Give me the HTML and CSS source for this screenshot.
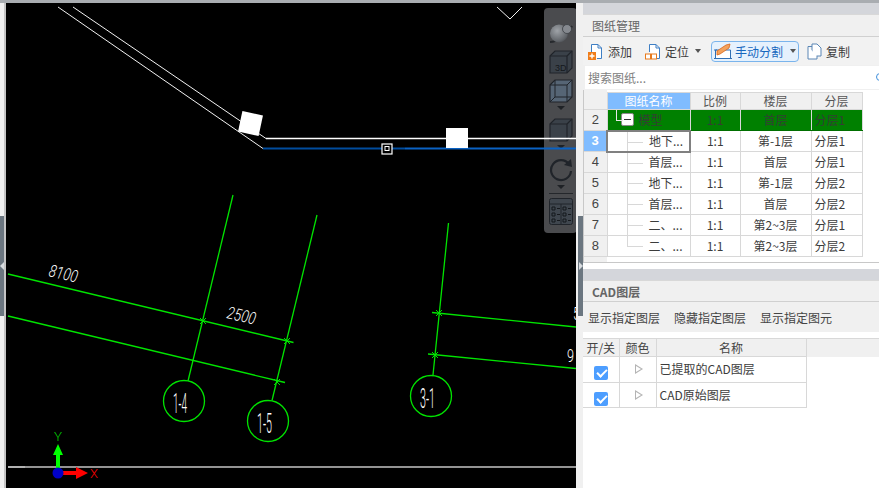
FILE: index.html
```html
<!DOCTYPE html>
<html lang="en">
<head>
  <meta charset="UTF-8">
  <meta name="viewport" content="width=device-width, initial-scale=1.0">
  <title>图纸管理</title>
  <link rel="stylesheet" href="styles.css">
</head>
<body>
  <div class="app">
    <div class="split split-left"><span class="grip"><i class="grip-arrow arrow-left"></i></span></div>

    <!-- drawing canvas -->
    <div class="canvas">
      <div class="view-tools">
        <svg class="vt-icon vt-sphere" width="24" height="22" viewBox="0 0 24 22">
          <defs>
            <radialGradient id="ball" cx="0.4" cy="0.35" r="0.8">
              <stop offset="0" stop-color="#9fa3a8"/>
              <stop offset="0.7" stop-color="#63676c"/>
              <stop offset="1" stop-color="#3a3d42"/>
            </radialGradient>
          </defs>
          <path d="M1 20 C8 20 19 13 23 4" fill="none" stroke="#26292d" stroke-width="2"/>
          <circle cx="10" cy="11.5" r="9" fill="url(#ball)"/>
          <circle cx="18" cy="7" r="4.5" fill="#85898f" stroke="#3a3d42" stroke-width="0.8"/>
        </svg>
        <svg class="vt-icon vt-box3d" width="24" height="24" viewBox="0 0 24 24">
          <path d="M1 6 L6 1 H23 V18 L18 23 H1 Z" fill="#3a4149" stroke="#20242a" stroke-width="1.2"/>
          <path d="M1 6 H18 V23 M18 6 L23 1" fill="none" stroke="#20242a" stroke-width="1.2"/>
          <text x="6" y="20.5" class="vt-3d">3D</text>
        </svg>
        <svg class="vt-icon vt-boxwire" width="24" height="24" viewBox="0 0 24 24">
          <path d="M1 6 L6 1 H23 V18 L18 23 H1 Z" fill="#566575" stroke="#20242a" stroke-width="1.2"/>
          <path d="M1 6 H18 V23 M18 6 L23 1 M6 1 V18 H23 M6 18 L1 23" fill="none" stroke="#20242a" stroke-width="1"/>
        </svg>
        <i class="vt-caret"></i>
        <svg class="vt-icon vt-near" width="24" height="24" viewBox="0 0 24 24">
          <path d="M1 6 L6 1 H23 V18 L18 23 H1 Z" fill="#3a4149" stroke="#20242a" stroke-width="1.2"/>
          <path d="M1 6 H18 V23 M18 6 L23 1" fill="none" stroke="#20242a" stroke-width="1.2"/>
        </svg>
        <i class="vt-caret"></i>
        <svg class="vt-icon vt-rotate" width="24" height="24" viewBox="0 0 24 24">
          <path d="M20 6 A10 10 0 1 0 22 13" fill="none" stroke="#20242a" stroke-width="2.2"/>
          <path d="M15 7 L23 9 L22 1 Z" fill="#20242a"/>
        </svg>
        <i class="vt-caret"></i>
        <span class="vt-sep"></span>
        <svg class="vt-icon" width="24" height="27" viewBox="0 0 24 27">
          <rect x="0.5" y="0.5" width="23" height="26" rx="2" fill="#3f464e" stroke="#20242a"/>
          <path d="M0.5 6 H23.5 M12 6 V26" stroke="#20242a" fill="none"/>
          <path d="M3 9 H6 V12 H3 Z M3 15 H6 V18 H3 Z M3 21 H6 V24 H3 Z M14 9 H17 V12 H14 Z M14 15 H17 V18 H14 Z M14 21 H17 V24 H14 Z M8 10.5 H11 M8 16.5 H11 M8 22.5 H11 M19 10.5 H22 M19 16.5 H22 M19 22.5 H22" stroke="#15181c" fill="none"/>
        </svg>
      </div>

      <svg class="drawing" width="570" height="485" viewBox="6 3 570 485">
        <g fill="none" stroke="#f2f2f2" stroke-width="1">
          <path d="M73 7 L266 138.5"/>
          <path d="M58 7 L263 148.5"/>
          <path d="M497 7 L510 19 L522 7"/>
          <path d="M266 138.5 H576" stroke="#fff" stroke-width="1.3"/>
        </g>
        <path d="M263 148.5 H405" stroke="#004c9e" stroke-width="2"/>
        <path d="M405 148.5 H576" stroke="#0a62c4" stroke-width="2"/>
        <rect x="240" y="113" width="21" height="21" fill="#fff" transform="rotate(12 250.5 123.5)"/>
        <rect x="446" y="128" width="22" height="20" fill="#fff"/>
        <rect x="382" y="144" width="10" height="10" fill="#000" stroke="#fff" stroke-width="1.2"/>
        <rect x="385" y="146.5" width="4" height="4" fill="#000" stroke="#fff"/>

        <g fill="none" stroke="#00e400" stroke-width="1.3">
          <path d="M8 274 L293.5 342.5"/>
          <path d="M8 316 L285 382.5"/>
          <path d="M233 195 L188 381"/>
          <path d="M317 215 L272 400.5"/>
          <path d="M448.5 223 L433 375"/>
          <path d="M432 312.5 L576 327"/>
          <path d="M428 354 L576 368.5"/>
          <circle cx="184" cy="401" r="20.5"/>
          <circle cx="268" cy="421" r="20.5"/>
          <circle cx="431" cy="396" r="20.5"/>
        </g>
        <g fill="none" stroke="#00e400" stroke-width="1">
          <path d="M200 318 L206 324 M206 318 L200 324"/>
          <path d="M284 338 L290 344 M290 338 L284 344"/>
          <path d="M274 379 L280 385 M280 379 L274 385"/>
          <path d="M436 310 L442 316 M442 310 L436 316"/>
          <path d="M432 352 L438 358 M438 352 L432 358"/>
        </g>

        <g class="cad-text">
          <text x="48" y="276" font-size="17" font-style="italic" textLength="29" lengthAdjust="spacingAndGlyphs" transform="rotate(13 48 276)">8100</text>
          <text x="226" y="318" font-size="17" font-style="italic" textLength="29" lengthAdjust="spacingAndGlyphs" transform="rotate(13 226 318)">2500</text>
          <text x="173" y="413" font-size="27" textLength="14" lengthAdjust="spacingAndGlyphs">1-4</text>
          <text x="257" y="433" font-size="27" textLength="15" lengthAdjust="spacingAndGlyphs">1-5</text>
          <text x="420" y="408" font-size="27" textLength="15" lengthAdjust="spacingAndGlyphs">3-1</text>
          <text x="573" y="320" font-size="18" textLength="7" lengthAdjust="spacingAndGlyphs">5</text>
          <text x="567" y="362" font-size="19" textLength="7" lengthAdjust="spacingAndGlyphs">9</text>
        </g>

        <path d="M8 467 H25" stroke="#fff" stroke-width="1.4"/>
        <path d="M25 467 H576" stroke="#c4c4c4" stroke-width="1.4"/>

        <path d="M56 473 V455 H53 L58 444 L63 455 H60 V473 Z" fill="#0f0"/>
        <path d="M58 471 H76 V467 L88 473 L76 479 V475 H58 Z" fill="#f00"/>
        <circle cx="58" cy="473" r="5.5" fill="#0000c8"/>
        <text x="54" y="441" class="axis-y" textLength="8" lengthAdjust="spacingAndGlyphs">Y</text>
        <text x="90" y="478" class="axis-x" textLength="8" lengthAdjust="spacingAndGlyphs">X</text>
      </svg>
    </div>

    <div class="split split-right"><span class="grip"><i class="grip-arrow arrow-right"></i></span></div>

    <!-- side panel -->
    <div class="side">
      <div class="band band-top"></div>
      <div class="pane-title">图纸管理</div>
      <div class="sheet-tools">
        <button class="tool tool-add">
          <svg width="15" height="17" viewBox="0 0 15 17">
            <path d="M3.5 9 V1.5 H10 L13.5 5 V15.5 H9" fill="#fff" stroke="#3f7fc4"/>
            <path d="M10 1.5 V5 H13.5" fill="none" stroke="#3f7fc4"/>
            <rect x="0" y="9" width="8" height="8" fill="#f07d1a"/>
            <path d="M4 10.5 V15.5 M1.5 13 H6.5" stroke="#fff" stroke-width="1.4"/>
          </svg>
          添加
        </button>
        <button class="tool tool-locate">
          <svg width="16" height="17" viewBox="0 0 16 17">
            <path d="M4.5 9 V1.5 H11 L14.5 5 V15.5 H12" fill="#fff" stroke="#3f7fc4"/>
            <path d="M11 1.5 V5 H14.5" fill="none" stroke="#3f7fc4"/>
            <rect x="0.5" y="11" width="5" height="5" fill="#fff" stroke="#e8791a"/>
            <rect x="6.5" y="11" width="5" height="5" fill="#fff" stroke="#e8791a"/>
          </svg>
          定位<i class="caret"></i>
        </button>
        <button class="tool tool-split">
          <svg width="18" height="17" viewBox="0 0 18 17">
            <path d="M1.5 7 H16.5 V15.5 H1.5 Z" fill="#fff" stroke="#2f6fb5"/>
            <path d="M3 8 L12 2 L16 1 L15 5 L6 11 L3 12 Z" fill="#f3a25c" stroke="#d9661a" stroke-width="0.8"/>
            <path d="M0 7 H3 M0 15.5 H3 M15 15.5 H18" stroke="#2f6fb5"/>
          </svg>
          手动分割<i class="caret"></i>
        </button>
        <button class="tool tool-copy">
          <svg width="15" height="17" viewBox="0 0 15 17">
            <path d="M5 1 H10 L14 5 V13 H5 Z" fill="#fff" stroke="#5a86b5"/>
            <path d="M1 3.5 H5 M1 3.5 V16 H10 V13" fill="#fff" stroke="#5a86b5"/>
          </svg>
          复制
        </button>
      </div>
      <div class="search">
        <input class="search-input" type="text" placeholder="搜索图纸...">
        <span class="search-dot"></span>
      </div>

      <div class="sheet-wrap">
        <table class="sheet-table">
          <colgroup>
            <col class="c-row"><col class="c-name"><col class="c-scale"><col class="c-floor"><col class="c-layer">
          </colgroup>
          <thead>
            <tr><th class="corner"></th><th class="head-on">图纸名称</th><th>比例</th><th>楼层</th><th>分层</th></tr>
          </thead>
          <tbody>
            <tr class="row-model">
              <th>2</th>
              <td class="tree tree-root"><span class="tree-box"></span>模型</td>
              <td>1:1</td><td>首层</td><td class="layer">分层1</td>
            </tr>
            <tr>
              <th class="head-on">3</th>
              <td class="tree tree-leaf current">地下...</td>
              <td>1:1</td><td>第-1层</td><td class="layer">分层1</td>
            </tr>
            <tr>
              <th>4</th>
              <td class="tree tree-leaf">首层...</td>
              <td>1:1</td><td>首层</td><td class="layer">分层1</td>
            </tr>
            <tr>
              <th>5</th>
              <td class="tree tree-leaf">地下...</td>
              <td>1:1</td><td>第-1层</td><td class="layer">分层2</td>
            </tr>
            <tr>
              <th>6</th>
              <td class="tree tree-leaf">首层...</td>
              <td>1:1</td><td>首层</td><td class="layer">分层2</td>
            </tr>
            <tr>
              <th>7</th>
              <td class="tree tree-leaf">二、...</td>
              <td>1:1</td><td>第2~3层</td><td class="layer">分层1</td>
            </tr>
            <tr>
              <th>8</th>
              <td class="tree tree-leaf tree-last">二、...</td>
              <td>1:1</td><td>第2~3层</td><td class="layer">分层2</td>
            </tr>
          </tbody>
        </table>
      </div>

      <div class="band band-mid"></div>
      <div class="pane-title pane-title-bold">CAD图层</div>
      <div class="layer-tools">
        <span>显示指定图层</span>
        <span>隐藏指定图层</span>
        <span>显示指定图元</span>
      </div>
      <table class="layer-table">
        <colgroup>
          <col class="l-on"><col class="l-color"><col class="l-name"><col>
        </colgroup>
        <thead>
          <tr><th>开/关</th><th>颜色</th><th>名称</th><th class="filler"></th></tr>
        </thead>
        <tbody>
          <tr class="layer-row-a">
            <td><span class="check"></span></td>
            <td><span class="play"></span></td>
            <td class="layer-name">已提取的CAD图层</td>
            <td class="filler"></td>
          </tr>
          <tr class="layer-row-b">
            <td><span class="check"></span></td>
            <td><span class="play"></span></td>
            <td class="layer-name">CAD原始图层</td>
            <td class="filler"></td>
          </tr>
        </tbody>
      </table>
    </div>
  </div>
</body>
</html>
```

FILE: styles.css
```css
* {
  box-sizing: border-box;
}

html, body {
  margin: 0;
  padding: 0;
  height: 100%;
  overflow: hidden;
}

body {
  font-family: "Noto Sans CJK SC", "Liberation Sans", sans-serif;
  font-size: 12px;
  color: #3c3c3c;
  background: #fff;
}

.app {
  display: flex;
  width: 879px;
  height: 488px;
  border-top: 3px solid #a9adb1;
}

/* splitters */
.split {
  position: relative;
  flex: none;
  background: #f0f0f0;
}
.split-left {
  width: 6px;
  border-right: 2px solid #c4c4c4;
}
.split-right {
  width: 7px;
}
.grip {
  position: absolute;
  top: 213px;
  width: 5px;
  height: 100px;
  background: #6b7680;
}
.split-left .grip {
  left: 0;
  width: 4px;
}
.split-right .grip {
  left: 2px;
}
.grip-arrow {
  position: absolute;
  top: 46px;
  width: 0;
  height: 0;
  border-top: 4px solid transparent;
  border-bottom: 4px solid transparent;
}
.arrow-left {
  left: 0;
  border-right: 4px solid #d8dce0;
}
.arrow-right {
  left: 1px;
  border-left: 4px solid #d8dce0;
}

/* canvas */
.canvas {
  position: relative;
  flex: none;
  width: 570px;
  height: 485px;
  background: #000;
  overflow: hidden;
}
.drawing {
  position: absolute;
  left: 0;
  top: 0;
  display: block;
}
.cad-text text {
  font-family: Roboto, "Liberation Sans", sans-serif;
  font-weight: 300;
  fill: #fff;
}
.axis-y, .axis-x {
  font-family: Roboto, "Liberation Sans", sans-serif;
  font-weight: 300;
  font-size: 12px;
}
.axis-y {
  fill: #00d000;
}
.axis-x {
  fill: #f00;
}

.view-tools {
  position: absolute;
  left: 538px;
  top: 5px;
  width: 33px;
  height: 225px;
  padding-top: 14px;
  display: flex;
  flex-direction: column;
  align-items: center;
  background: #4a4b4e;
  border-radius: 4px;
}
.vt-icon {
  display: block;
  flex: none;
}
.vt-box3d {
  margin-top: 6px;
}
.vt-boxwire {
  margin-top: 5px;
}
.vt-near {
  margin-top: 8px;
}
.vt-rotate {
  margin-top: 9px;
}
.vt-3d {
  font-family: "Liberation Sans", sans-serif;
  font-size: 9px;
  fill: #15181c;
}
.vt-caret {
  flex: none;
  width: 0;
  height: 0;
  margin-top: 3px;
  border-left: 4px solid transparent;
  border-right: 4px solid transparent;
  border-top: 4px solid #1f2226;
}
.vt-sep {
  flex: none;
  width: 24px;
  height: 1px;
  margin: 4px 0 4px;
  background: #24272b;
}

/* side panel */
.side {
  flex: 1;
  min-width: 0;
  display: flex;
  flex-direction: column;
  background: #fff;
}
.band {
  flex: none;
  background: #d4d6db;
}
.band-top {
  height: 11px;
}
.band-mid {
  height: 11px;
  margin-top: 6px;
}
.pane-title {
  flex: none;
  height: 23px;
  line-height: 22px;
  padding-left: 9px;
  color: #666;
  background: #f0f0f0;
  border-top: 1px solid #d8d8d8;
  border-bottom: 1px solid #d0d0d0;
}
.pane-title-bold {
  height: 22px;
  font-weight: 700;
}

.sheet-tools {
  flex: none;
  height: 28px;
  display: flex;
  align-items: center;
  padding-left: 5px;
  background: #f2f2f2;
}
.tool {
  display: flex;
  align-items: center;
  height: 21px;
  padding: 0;
  border: 0;
  background: none;
  font: inherit;
  color: #3c3c3c;
  white-space: nowrap;
}
.tool-add svg {
  margin-right: 5px;
}
.tool-locate svg {
  margin-right: 4px;
}
.tool-copy svg {
  margin-right: 4px;
}
.tool-locate {
  margin-left: 13px;
}
.tool-split {
  margin-left: 10px;
  width: 88px;
  padding-left: 2px;
  border: 1px solid #7ab4ec;
  border-radius: 4px;
  background: #e5f1fd;
  color: #1667bd;
}
.tool-split svg {
  margin-right: 3px;
}
.tool-copy {
  margin-left: 8px;
}
.caret {
  width: 0;
  height: 0;
  margin-left: 6px;
  border-left: 3px solid transparent;
  border-right: 3px solid transparent;
  border-top: 4px solid #555;
}
.tool-split .caret {
  margin-left: 7px;
}

.search {
  flex: none;
  position: relative;
  height: 25px;
  padding: 1px 0 1px 2px;
  background: #f0f0f0;
  overflow: hidden;
}
.search-input {
  display: block;
  width: 100%;
  height: 23px;
  padding: 0 3px;
  border: 0;
  outline: 0;
  font: inherit;
  color: #333;
  background: #fff;
}
.search-input::placeholder {
  color: #808080;
  opacity: 1;
}
.search-dot {
  position: absolute;
  left: 293px;
  top: 8px;
  width: 8px;
  height: 8px;
  border: 1.5px solid #3f8fdc;
  border-radius: 50%;
}

.sheet-wrap {
  flex: none;
  height: 173px;
  padding-top: 2px;
  border-left: 1px solid #c8c8c8;
  border-bottom: 1px solid #c8c8c8;
  background: linear-gradient(#f0f0f0, #f0f0f0) left top / 23px 100% no-repeat #fff;
}
.sheet-table {
  table-layout: fixed;
  width: 278px;
  border-collapse: collapse;
  line-height: 16px;
}
.c-row { width: 23px; }
.c-name { width: 83px; }
.c-scale { width: 50px; }
.c-floor { width: 71px; }
.c-layer { width: 51px; }

.sheet-table th, .sheet-table td {
  height: 21px;
  padding: 0;
  border: 1px solid #d8d8d8;
  text-align: center;
  font-weight: 400;
  white-space: nowrap;
}
.sheet-table thead th {
  height: 16px;
  background: #f0f0f0;
  color: #555;
}
.sheet-table tbody th {
  background: #f0f0f0;
  border-left: 0;
  font-size: 13px;
  font-family: "Liberation Sans", sans-serif;
  color: #444;
}
.sheet-table .corner {
  border-left: 0;
  border-top: 0;
}
.sheet-table th.head-on {
  background: #80bcff;
  color: #fff;
  font-weight: 700;
}
.sheet-table thead th.head-on {
  font-weight: 400;
}
.sheet-table td.layer {
  text-align: left;
  padding-left: 3px;
}

.tree {
  position: relative;
}
.sheet-table td.tree-leaf {
  text-align: left;
  padding-left: 41px;
}
.tree-leaf::before {
  content: "";
  position: absolute;
  left: 19px;
  top: 0;
  width: 16px;
  height: 100%;
  background:
    linear-gradient(#d8d8d8, #d8d8d8) left top / 1px 100% no-repeat,
    linear-gradient(#d8d8d8, #d8d8d8) left 10px / 100% 1px no-repeat;
}
.tree-last::before {
  background:
    linear-gradient(#d8d8d8, #d8d8d8) left top / 1px 11px no-repeat,
    linear-gradient(#d8d8d8, #d8d8d8) left 10px / 100% 1px no-repeat;
}
.sheet-table td.current {
  border: 2px solid #808080;
}
.row-model td {
  background: #008000;
  color: #333f33;
  border-color: #006f00 #d8d8d8;
}
.sheet-table .row-model td.tree-root {
  text-align: left;
  padding-left: 31px;
}
.tree-box {
  position: absolute;
  left: 13px;
  top: 3px;
  width: 13px;
  height: 13px;
  border: 1px solid #8a8a8a;
  border-radius: 2px;
  background: linear-gradient(#333, #333) center / 7px 1px no-repeat #fff;
}
.tree-box::before {
  content: "";
  position: absolute;
  left: -6px;
  top: -4px;
  width: 6px;
  height: 10px;
  border-left: 1px solid #e8e8e8;
  border-bottom: 1px solid #e8e8e8;
}

.layer-tools {
  flex: none;
  height: 30px;
  display: flex;
  align-items: center;
  gap: 14px;
  padding-left: 5px;
  background: #f0f0f0;
  color: #444;
}
.layer-table {
  flex: none;
  width: 296px;
  margin-top: 6px;
  table-layout: fixed;
  border-collapse: collapse;
}
.l-on { width: 36px; }
.l-color { width: 37px; }
.l-name { width: 150px; }

.layer-table th, .layer-table td {
  padding: 0;
  border: 1px solid #d8d8d8;
  text-align: center;
  font-weight: 400;
  white-space: nowrap;
}
.layer-table th {
  height: 18px;
  line-height: 17px;
  background: #f0f0f0;
  color: #444;
  border-left: 0;
}
.layer-table td {
  border-left: 0;
  vertical-align: top;
}
.layer-row-a td {
  height: 26px;
}
.layer-row-b td {
  height: 25px;
}
.layer-table td.layer-name {
  text-align: left;
  padding: 3px 0 0 3px;
  line-height: 18px;
}
.layer-table .filler {
  border: 0;
  border-top: 1px solid #d8d8d8;
}
.layer-table td.filler {
  border: 0;
}
.check {
  display: block;
  position: relative;
  width: 14px;
  height: 14px;
  margin: 9px 0 0 11px;
  border-radius: 2px;
  background: #4d9eff;
}
.check::after {
  content: "";
  position: absolute;
  left: 3px;
  top: 3px;
  width: 8px;
  height: 4px;
  border-left: 2px solid #fff;
  border-bottom: 2px solid #fff;
  transform: rotate(-45deg);
}
.play {
  display: block;
  position: relative;
  width: 0;
  height: 0;
  margin: 7px 0 0 15px;
  border-top: 5px solid transparent;
  border-bottom: 5px solid transparent;
  border-left: 8px solid #b4b4b4;
}
.play::after {
  content: "";
  position: absolute;
  left: -7px;
  top: -3px;
  width: 0;
  height: 0;
  border-top: 3px solid transparent;
  border-bottom: 3px solid transparent;
  border-left: 5px solid #fff;
}
```
